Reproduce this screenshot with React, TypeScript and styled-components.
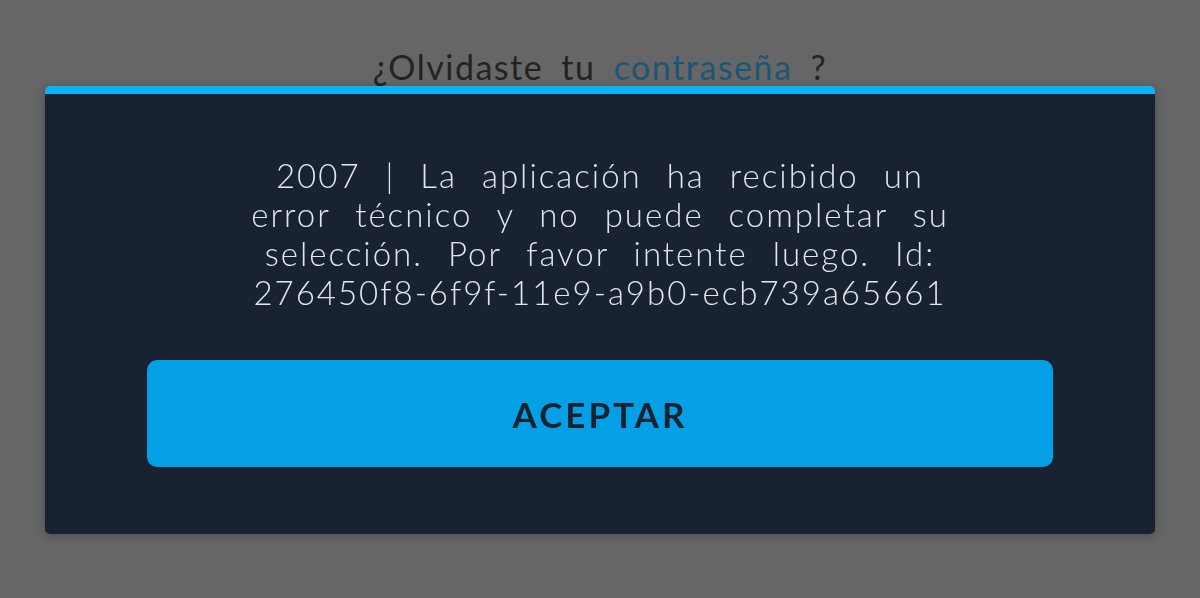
import styled, { createGlobalStyle } from 'styled-components';

const GlobalStyle = createGlobalStyle`
  html, body {
    margin: 0;
    padding: 0;
    background: #666666;
    font-family: Lato, 'Noto Sans', sans-serif;
  }
`;

const Page = styled.div`
  height: 598px;
  overflow: hidden;
  display: flex;
  justify-content: center;
  padding-top: 46px;
  box-sizing: border-box;
`;

const ForgotText = styled.p`
  margin: 0;
  font-family: Lato, 'Noto Sans', sans-serif;
  font-size: 34px;
  font-weight: 400;
  letter-spacing: 1.5px;
  word-spacing: 8px;
  color: #232323;
  line-height: 42px;
`;

const ForgotLink = styled.span`
  color: #1c5674;
`;

const Overlay = styled.div`
  position: fixed;
  inset: 0;
  display: flex;
  justify-content: center;
  align-items: flex-start;
  padding-top: 86px;
`;

const Modal = styled.div`
  width: 1110px;
  background: #182230;
  border-top: 8px solid #0bb2f4;
  border-radius: 5px;
  box-shadow: 0 2px 8px rgba(0, 0, 0, 0.25);
  padding: 62px 102px 67px;
  box-sizing: border-box;
  display: flex;
  flex-direction: column;
  gap: 48px;
`;

const Message = styled.div`
  display: flex;
  flex-direction: column;
  align-items: center;
  font-family: Lato, 'Noto Sans', sans-serif;
  font-size: 33px;
  font-weight: 300;
  line-height: 39px;
  letter-spacing: 2px;
  word-spacing: 14px;
  color: #e2e6ec;
`;

const MessageLine = styled.span`
  white-space: nowrap;
`;

const AcceptButton = styled.button`
  height: 107px;
  border: none;
  border-radius: 10px;
  background: #03a0e6;
  color: #172231;
  font-family: Lato, 'Noto Sans', sans-serif;
  font-size: 35px;
  font-weight: 700;
  letter-spacing: 3px;
  cursor: pointer;
`;

const lines = [
  '2007 | La aplicación ha recibido un',
  'error técnico y no puede completar su',
  'selección. Por favor intente luego. Id:',
  '276450f8-6f9f-11e9-a9b0-ecb739a65661',
];

export default function App() {
  return (
    <>
      <GlobalStyle />
      <Page>
        <ForgotText>
          ¿Olvidaste tu <ForgotLink>contraseña</ForgotLink> ?
        </ForgotText>
      </Page>
      <Overlay>
        <Modal>
          <Message>
            {lines.map(line => (
              <MessageLine key={line}>{line}</MessageLine>
            ))}
          </Message>
          <AcceptButton>ACEPTAR</AcceptButton>
        </Modal>
      </Overlay>
    </>
  );
}
